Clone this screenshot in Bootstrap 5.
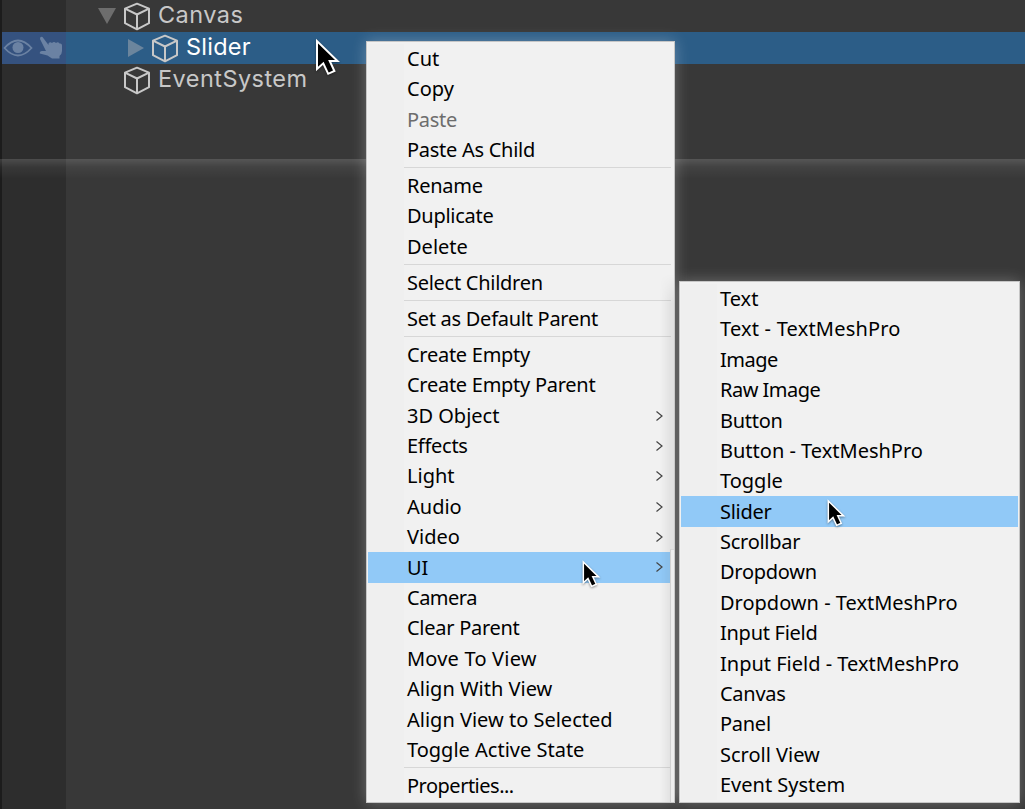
<!DOCTYPE html>
<html lang="en">
<head>
<meta charset="utf-8">
<title>Hierarchy</title>
<link href="https://cdn.jsdelivr.net/npm/bootstrap@5.3.0/dist/css/bootstrap.min.css" rel="stylesheet">
<script src="https://cdn.jsdelivr.net/npm/bootstrap@5.3.0/dist/js/bootstrap.bundle.min.js"></script>
<style>
body{width:1025px;height:809px;background:#383838;color:#c8c8c8}
.tree{height:159px;background:linear-gradient(90deg,#1c1c1c 2px,#2d2d2d 2px,#2d2d2d 66px,#383838 66px)}
.lower{height:650px;background:linear-gradient(180deg,rgba(255,255,255,.15),rgba(255,255,255,.05) 8px,transparent 20px),linear-gradient(90deg,#1c1c1c 2px,#2d2d2d 2px,#2d2d2d 66px,#383838 66px)}
.node{height:32px;font:400 23.5px/32px Inter,sans-serif;white-space:nowrap;letter-spacing:.45px}
.node span{position:relative;top:-1px}
.node.picked{background:linear-gradient(90deg,#1c1c1c 2px,#35527f 2px,#35527f 66px,#2c5d87 66px);color:#fff}
.node.picked span{letter-spacing:.25px}
.gutter{width:66px}
.cube{width:28px;height:30px;margin-right:7px;flex:none}
.tri-open{width:18px;height:16px;margin:0 7px 0 32px}
.tri-shut{width:16px;height:18px;margin:0 7px 0 62px}
.leaf{margin-left:57px}
.menu{background:#f1f1f1;border:1px solid #c6c6c6;border-radius:0;color:#000;font:400 20px/30.4px "Noto Sans",sans-serif;padding-top:1.95px;box-shadow:0 0 14px rgba(255,255,255,.27);overflow:visible}
.menu-main{left:366px;top:41px;width:309px;height:762px}
.menu-sub{left:679px;top:281px;width:341px;height:522px}
.menu::before{content:"";position:absolute;left:1px;top:2px;bottom:2px;width:36px;background:#efefef}
.entry{position:relative;height:30.4px;margin:0 1px;padding-left:39px;white-space:nowrap}
.menu-main .entry{margin-right:4px}
.menu .entry.hot{background:#91c9f7;margin-top:-.4px;padding-top:.4px;margin-bottom:.4px}
.entry.off{color:#6d6d6d}
.tight{letter-spacing:-.27px}
.slim{letter-spacing:-.5px}
.loose{letter-spacing:.2px}
.rule{position:relative;height:5.6px;margin:0 3px 0 37px}
.rule::after{content:"";position:absolute;left:0;right:0;top:1.700px;height:1px;background:#d7d7d7}
.chev{position:absolute;right:6.500px;top:9px;width:9px;height:12px}
.seam{left:303px;top:507px;bottom:0;width:4px;border-left:1px solid #cfcfcf;border-top:1px solid #d6d6d6;background:#ececec}
.shade{right:0;top:232px;bottom:0;width:14px;background:linear-gradient(90deg,transparent,rgba(0,0,0,.08));-webkit-mask-image:linear-gradient(180deg,transparent,#000 30px)}
.pointer{overflow:visible;filter:drop-shadow(0 1px 1px rgba(0,0,0,.4));z-index:9}
</style>
</head>
<body class="position-relative overflow-hidden m-0">
<svg width="0" height="0" class="position-absolute">
<defs>
<g id="cube" fill="none" stroke="#c8c8c8" stroke-width="2" stroke-linejoin="round"><path d="M14 2.7 26 7.700V22.200L14 28.300 2 22.200V7.700Z M2 7.700 14 13.500 26 7.700 M14 13.500V28.300"/></g>
<path id="arrow" d="M0 0V28L6.300 22.300 11.200 32.800 17.400 30 12.700 20H20.500Z" fill="#000" stroke="#fff" stroke-width="2"/>
</defs></svg>
<div class="tree">
 <div class="node d-flex align-items-center"><div class="gutter"></div><svg class="tri-open"><path d="M0 0H18L9 16Z" fill="#6d6d6d"/></svg><svg class="cube"><use href="#cube"/></svg><span>Canvas</span></div>
 <div class="node picked d-flex align-items-center"><div class="gutter d-flex align-items-center">
  <svg width="30" height="20" style="margin-left:3px"><path d="M1.500 10Q15-5 28.500 10Q15 25 1.500 10Z" fill="none" stroke="#6b82a3" stroke-width="1.800"/><circle cx="15" cy="9.500" r="5.500" fill="#6b82a3"/></svg>
  <svg width="24" height="24" style="margin-left:6px"><path d="M1 3Q1 0 3.500 1L9.500 9V7.500Q11 5.500 13 7Q15 5 17 7Q19 5.500 20.500 7.500Q23 7 23 9.500V15Q23 18 20.500 20V22.500H13L8.500 19.500 .800 17.500Q.500 15 3 15L7 15Z" fill="#6b82a3"/></svg></div>
  <svg class="tri-shut"><path d="M0 0 16 9 0 18Z" fill="#6b859d"/></svg><svg class="cube"><use href="#cube"/></svg><span>Slider</span></div>
 <div class="node d-flex align-items-center"><div class="gutter"></div><svg class="cube leaf"><use href="#cube"/></svg><span>EventSystem</span></div>
</div>
<div class="lower"></div>

<div class="menu menu-main position-absolute" id="mainMenu">
 <div class="entry">Cut</div><div class="entry">Copy</div><div class="entry off tight">Paste</div><div class="entry tight">Paste As Child</div>
 <div class="rule"></div>
 <div class="entry tight">Rename</div><div class="entry tight">Duplicate</div><div class="entry">Delete</div>
 <div class="rule"></div><div class="entry tight">Select Children</div>
 <div class="rule"></div><div class="entry tight">Set as Default Parent</div>
 <div class="rule"></div>
 <div class="entry tight">Create Empty</div><div class="entry tight">Create Empty Parent</div>
 <div class="entry more">3D Object</div><div class="entry more tight">Effects</div><div class="entry more">Light</div><div class="entry more">Audio</div><div class="entry more">Video</div><div class="entry more hot">UI</div>
 <div class="entry slim">Camera</div><div class="entry tight">Clear Parent</div><div class="entry loose">Move To View</div><div class="entry">Align With View</div><div class="entry">Align View to Selected</div><div class="entry">Toggle Active State</div>
 <div class="rule"></div><div class="entry slim">Properties...</div>
 <div class="shade position-absolute"></div><div class="seam position-absolute"></div>
</div>
<div class="menu menu-sub position-absolute">
 <div class="entry">Text</div><div class="entry loose">Text - TextMeshPro</div><div class="entry slim">Image</div><div class="entry slim">Raw Image</div><div class="entry tight">Button</div><div class="entry">Button - TextMeshPro</div><div class="entry">Toggle</div><div class="entry hot tight">Slider</div><div class="entry tight">Scrollbar</div><div class="entry tight">Dropdown</div><div class="entry">Dropdown - TextMeshPro</div><div class="entry tight">Input Field</div><div class="entry">Input Field - TextMeshPro</div><div class="entry tight">Canvas</div><div class="entry tight">Panel</div><div class="entry">Scroll View</div><div class="entry">Event System</div>
</div>
<svg class="pointer position-absolute" style="left:317px;top:41px" width="22" height="35"><use href="#arrow"/></svg>
<svg class="pointer position-absolute" style="left:583px;top:562px" width="17" height="26" viewBox="0 0 22 35"><use href="#arrow"/></svg>
<svg class="pointer position-absolute" style="left:828px;top:501px" width="17" height="26" viewBox="0 0 22 35"><use href="#arrow"/></svg>
<script>
document.querySelectorAll('.more').forEach(e=>e.insertAdjacentHTML('beforeend','<svg class="chev"><path d="M1.500 1.500 7 6 1.500 10.500" fill="none" stroke="#444" stroke-width="1.200"/></svg>'));
</script>
</body>
</html>
